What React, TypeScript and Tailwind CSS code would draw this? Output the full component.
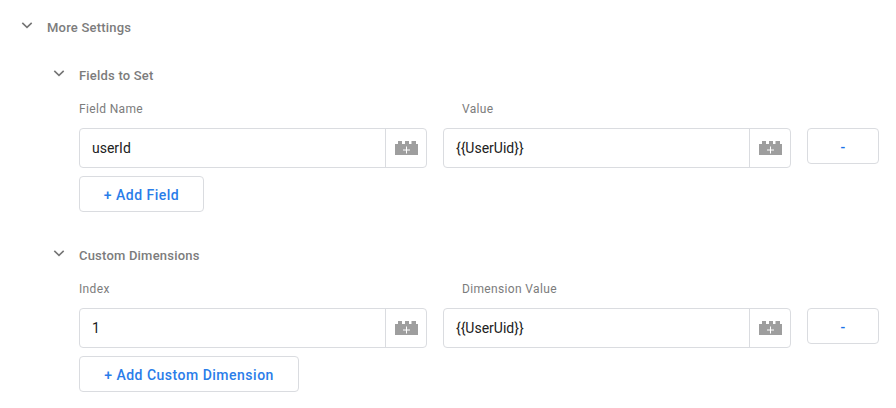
const font = { fontFamily: "Roboto, sans-serif" };

function Chevron() {
  return (
    <svg width="12" height="8" viewBox="0 0 12 8" className="block">
      <path d="M1.3 0.9 L6 5.3 L10.7 0.9" fill="none" stroke="#757575" strokeWidth="1.6" />
    </svg>
  );
}

function Brick() {
  return (
    <svg width="23" height="14" viewBox="0 0 23 14" className="block">
      <path d="M0 3h3V0h4v3h3V0h4v3h2.5V0H21v3h2v11H0z" fill="#9e9e9e" />
      <path d="M11.5 5.5v7M8 9h7" stroke="#fff" strokeWidth="1" fill="none" />
    </svg>
  );
}

function Field({ value }: { value: string }) {
  return (
    <div className="flex h-10 w-[348px] rounded border border-[#dadce0] bg-white">
      <div className="flex-1 pl-3 text-[14px] leading-[38px] text-[#212121]">{value}</div>
      <div className="flex w-[41px] items-center justify-center border-l border-[#dadce0]">
        <Brick />
      </div>
    </div>
  );
}

function Row({
  title, left, right, first, add, addClass,
}: { title: string; left: string; right: string; first: string; add: string; addClass: string }) {
  return (
    <div>
      <div className="flex h-5 items-center">
        <div className="w-[27px] pl-[1px] pb-1"><Chevron /></div>
        <div className="text-[13px] font-medium tracking-[0.2px] text-[#7c7c7c]">{title}</div>
      </div>
      <div className="ml-[27px] mt-[13px]">
        <div className="flex h-5 items-center text-[12px] tracking-[0.35px] text-[#7c7c7c]">
          <div className="w-[364px]">{left}</div>
          <div className="pl-[19px]">{right}</div>
        </div>
        <div className="mt-[9px] flex items-start gap-4">
          <Field value={first} />
          <Field value="{{UserUid}}" />
          <button className="h-9 w-[72px] rounded border border-[#dadce0] bg-white pt-[2px] text-[14px] font-medium text-[#1a73e8]">-</button>
        </div>
        <button className={`mt-2 h-9 rounded border border-[#dadce0] bg-white pt-[2px] text-[14px] font-medium tracking-[0.5px] text-[#2a7de9] ${addClass}`}>{add}</button>
      </div>
    </div>
  );
}

export default function App() {
  return (
    <div className="h-[408px] w-[896px] overflow-hidden bg-white pt-[18px] pl-5" style={font}>
      <div className="flex h-5 items-center">
        <div className="w-[27px] pl-[1px] pb-1"><Chevron /></div>
        <div className="text-[13px] font-medium tracking-[0.2px] text-[#7c7c7c]">More Settings</div>
      </div>
      <div className="ml-[32px] mt-7 flex flex-col gap-[34px]">
        <Row title="Fields to Set" left="Field Name" right="Value" first="userId" add="+ Add Field" addClass="w-[125px]" />
        <Row title="Custom Dimensions" left="Index" right="Dimension Value" first="1" add="+ Add Custom Dimension" addClass="w-[220px]" />
      </div>
    </div>
  );
}
